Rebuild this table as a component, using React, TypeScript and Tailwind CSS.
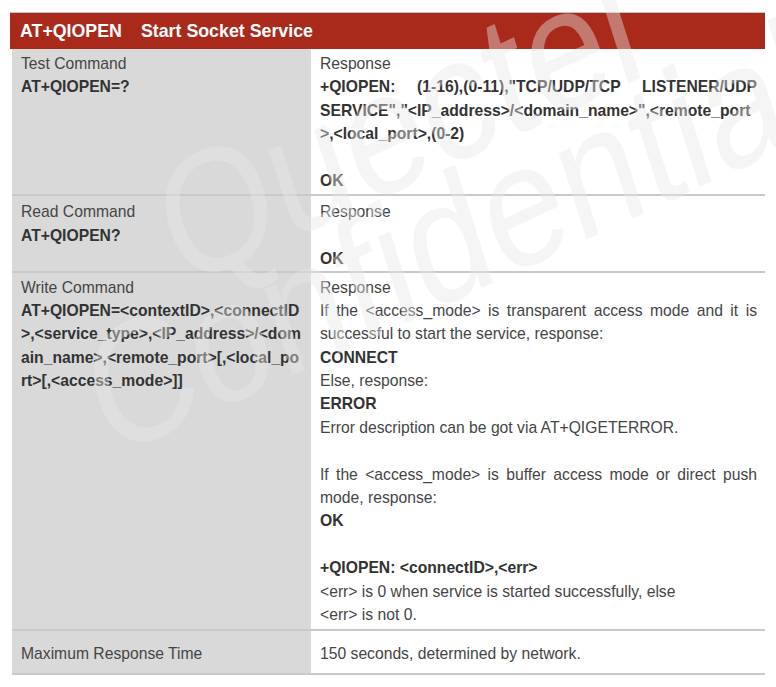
import React from 'react';

type LineProps = {
  text?: string;
  bold?: boolean;
  justify?: boolean;
};

// one printed line of the spec table; blank lines keep their height
function Line({ text, bold, justify }: LineProps) {
  return (
    <div
      className={
        'h-[23.4px] leading-[23.4px] whitespace-nowrap ' +
        (bold ? 'font-bold text-[#333333] ' : 'text-[#454545] ') +
        (justify ? 'text-justify [text-align-last:justify]' : '')
      }
    >
      {text ?? '\u00a0'}
    </div>
  );
}

function Row({
  left,
  right,
  className = 'pt-[3px] pb-[2px]',
}: {
  left: React.ReactNode;
  right: React.ReactNode;
  className?: string;
}) {
  return (
    <div className="flex ml-[2px] border-b-2 border-[#c9c9c9]">
      <div className={'w-[299px] shrink-0 bg-[#d9d9d9] pl-[9px] pr-[8px] ' + className}>{left}</div>
      <div className={'flex-1 pl-[9px] pr-[8px] ' + className}>{right}</div>
    </div>
  );
}

export default function App() {
  return (
    <div className="relative w-[776px] h-[687px] overflow-hidden bg-white text-[15.7px] font-['Liberation_Sans',Arial,sans-serif]">
      <div className="pt-[12px] pl-[10px] w-[765px]">
        <div className="border-t border-[#c4c4c4]">
          <div className="h-[36px] bg-[#a92a1b] flex items-center pl-[10px] text-white font-bold text-[17.8px]">
            <span>AT+QIOPEN</span>
            <span className="ml-[19px]">Start Socket Service</span>
          </div>
        </div>

        <Row
          left={
            <>
              <Line text="Test Command" />
              <Line text="AT+QIOPEN=?" bold />
            </>
          }
          right={
            <>
              <Line text="Response" />
              <Line text={'+QIOPEN: (1-16),(0-11),"TCP/UDP/TCP LISTENER/UDP'} bold justify />
              <Line text={'SERVICE","<IP_address>/<domain_name>",<remote_port'} bold />
              <Line text=">,<local_port>,(0-2)" bold />
              <Line />
              <Line text="OK" bold />
            </>
          }
        />

        <Row
          className="pt-[4px] pb-0"
          left={
            <>
              <Line text="Read Command" />
              <Line text="AT+QIOPEN?" bold />
            </>
          }
          right={
            <>
              <Line text="Response" />
              <Line />
              <Line text="OK" bold />
            </>
          }
        />

        <Row
          className="pt-[3px] pb-[3px]"
          left={
            <>
              <Line text="Write Command" />
              <Line text="AT+QIOPEN=<contextID>,<connectID" bold justify />
              <Line text=">,<service_type>,<IP_address>/<dom" bold justify />
              <Line text="ain_name>,<remote_port>[,<local_po" bold justify />
              <Line text="rt>[,<access_mode>]]" bold />
            </>
          }
          right={
            <>
              <Line text="Response" />
              <Line text="If the <access_mode> is transparent access mode and it is" justify />
              <Line text="successful to start the service, response:" />
              <Line text="CONNECT" bold />
              <Line text="Else, response:" />
              <Line text="ERROR" bold />
              <Line text="Error description can be got via AT+QIGETERROR." />
              <Line />
              <Line text="If the <access_mode> is buffer access mode or direct push" justify />
              <Line text="mode, response:" />
              <Line text="OK" bold />
              <Line />
              <Line text="+QIOPEN: <connectID>,<err>" bold />
              <Line text="<err> is 0 when service is started successfully, else" />
              <Line text="<err> is not 0." />
            </>
          }
        />

        <Row
          className="pt-[11px] pb-[7px]"
          left={<Line text="Maximum Response Time" />}
          right={<Line text="150 seconds, determined by network." />}
        />
      </div>

      {/* watermark, drawn over the table */}
      <div className="pointer-events-none absolute inset-0 z-10 text-[175px] leading-none text-[rgba(232,232,232,0.42)] font-['Liberation_Sans',Arial,sans-serif]">
        <span className="absolute left-[190px] top-[140px] origin-bottom-left whitespace-nowrap [transform:scaleX(0.83)_rotate(-21deg)]">
          Quectel
        </span>
        <span className="absolute left-[118px] top-[310px] origin-bottom-left whitespace-nowrap [transform:scaleX(0.83)_rotate(-21deg)]">
          Confidential
        </span>
      </div>
    </div>
  );
}
